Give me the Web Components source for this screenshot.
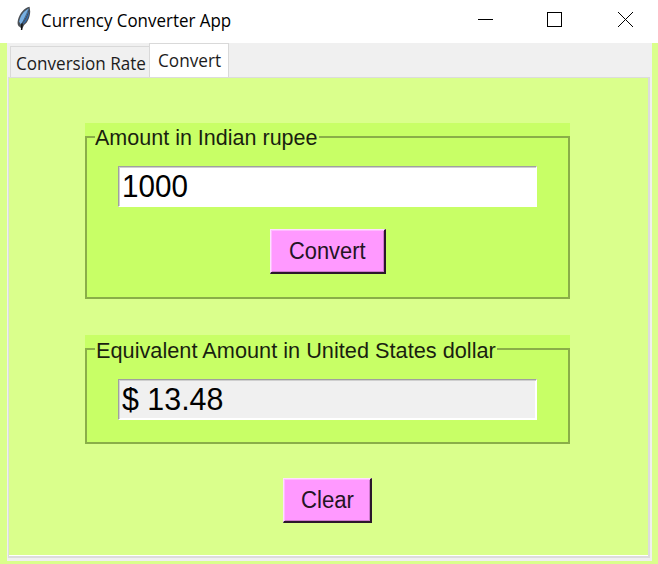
<!DOCTYPE html>
<html lang="en">
<head>
<meta charset="utf-8">
<title>Currency Converter App</title>
<style>
html,body{margin:0;width:658px;height:564px;overflow:hidden;background:#daff8c}
</style>
</head>
<body>
<converter-app></converter-app>
<script>
const define = (name, html, ready) => {
  const t = document.createElement('template');
  t.innerHTML = html;
  customElements.define(name, class extends HTMLElement {
    connectedCallback() {
      if (this.shadowRoot) return;
      this.attachShadow({mode: 'open'}).append(t.content.cloneNode(true));
      if (ready) ready.call(this, this.shadowRoot);
    }
  });
};

// A single line of text stretched horizontally to the given width.
define('fit-text', `<style>
:host{display:block;white-space:pre;flex:none}
span{display:inline-block;transform-origin:0 50%}
</style><span><slot></slot></span>`, function (root) {
  const w = +this.getAttribute('width');
  const s = root.querySelector('span');
  this.style.width = w + 'px';
  s.style.transform = `scaleX(${w / s.offsetWidth})`;
});

define('title-bar', `<style>
:host{display:flex;height:43px;background:#fff;color:#000;font:18px/22px "Open Sans","Noto Sans",sans-serif;box-sizing:border-box;padding-left:15px}
.feather{width:20px;height:32px;margin-top:4px}
.name{margin:9px 0 0 6px}
.controls{margin-left:auto;width:188px;height:43px}
</style>
<svg class="feather" viewBox="0 0 20 32">
<path d="M14.6 2.8C9.5 3.6 4.6 9.6 3 15.8C2 20 3 22 4.6 22.8L7 25L9.2 21C13.2 18.5 15 12.5 15.2 7.6Z" fill="#4a4f55"/>
<path d="M13.8 4.4C9 6.5 5 12 4.2 17.4L5.6 20.6C10 15.6 12.6 10 13.8 4.4Z" fill="#78b0e2"/>
<path d="M14.3 6.4C13 12 10.4 16.5 7.4 20.2L9 19.4C12.8 16 14.4 11 14.3 6.4Z" fill="#2f6cb4"/>
<path d="M13.5 5.5C11 12 8.5 16 6.6 21" fill="none" stroke="#2a4e78" stroke-width=".7"/>
<path d="M7 19.5L6.6 26" fill="none" stroke="#111" stroke-width="1.5"/>
</svg>
<fit-text class="name" width="190">Currency Converter App</fit-text>
<svg class="controls" viewBox="0 0 188 43" fill="none" stroke="#000">
<path d="M8 19.5h15" shape-rendering="crispEdges"/>
<path d="M77.5 12.5h14v14h-14z" shape-rendering="crispEdges"/>
<path d="M148 12l15 15m0-15l-15 15"/>
</svg>`);

define('tab-label', `<style>
:host{display:block;box-sizing:border-box;border:1px solid #d9d9d9;border-bottom:0;background:#f0f0f0;color:#1c1c1c;font:18px/24px "Open Sans","Noto Sans",sans-serif;width:140px;height:31px;padding:4px 0 0 5px}
:host([selected]){background:#fff;width:80px;height:34px;padding:4px 0 0 8px;margin-left:-1px;z-index:1}
</style><slot></slot>`);

define('tab-book', `<style>
:host{display:flex;flex-direction:column;box-sizing:border-box;width:645px;height:518px;margin-left:7px;border-left:1px solid #f0f0f0;background:#f0f0f0}
.tabs{display:flex;align-items:flex-end;height:34px;padding-left:2px}
.page{box-sizing:border-box;width:642px;height:481px;border:1px solid #dcdcdc;border-width:1px 2px 2px 1px;background:#daff8c;box-shadow:inset 0 -1px #fff;display:flex;flex-direction:column;align-items:center;padding:45px 2px 0 0}
</style><div class="tabs"><slot name="tab"></slot></div><div class="page"><slot></slot></div>`);

define('label-frame', `<style>
:host{display:block;box-sizing:border-box;width:485px;background:#c8ff66;font:22px/26px "Liberation Sans",Arial,sans-serif;color:#1a1f10;padding-top:13px}
.frame{display:flex;flex-direction:column;align-items:center;box-sizing:border-box;height:100%;border:2px solid #8aae48;width:485px}
.legend{align-self:flex-start;background:#c8ff66;margin:-13px 0 0 8px;padding:0 1px 0 0;height:26px}
:host(.second) .legend{padding:1px 1px 0 1px;height:25px}
</style><div class="frame"><div class="legend"><slot name="legend"></slot></div><slot></slot></div>`);

define('entry-box', `<style>
:host{display:block;box-sizing:border-box;width:419px;height:41px;margin-top:15px;background:#fff;border:1px solid;border-color:#a0a0a0 #fff #fff #a0a0a0;box-shadow:inset 1px 1px #cfcfcf,inset -1px -1px #fff;color:#000;font:31px/39px "Liberation Sans",Arial,sans-serif;padding-left:3px}
:host([readonly]){background:#f0f0f0;margin-top:16px}
</style><slot></slot>`);

define('push-button', `<style>
:host{display:flex;justify-content:center;box-sizing:border-box;width:116px;height:45px;margin-top:22px;background:#ff99ff;color:#241424;font:23px/42px "Liberation Sans",Arial,sans-serif;border:1px solid;border-color:#ffe0ff #2b182b #2b182b #ffe0ff;border-width:1px 2px 2px 1px;box-shadow:inset 1px 1px #ffbaff,inset -1px -1px #cc79cc}
:host([small]){width:89px;margin-top:34px}
</style><slot></slot>`);

define('converter-app', `<style>
:host{display:block;width:658px;height:564px;background:#daff8c}
.first{height:176px}.second{height:109px;margin-top:36px}
</style>
<title-bar></title-bar>
<tab-book>
<tab-label slot="tab"><fit-text width="130">Conversion Rate</fit-text></tab-label>
<tab-label slot="tab" selected><fit-text width="63">Convert</fit-text></tab-label>
<label-frame class="first"><fit-text slot="legend" width="223">Amount in Indian rupee</fit-text>
<entry-box><fit-text width="66">1000</fit-text></entry-box>
<push-button><fit-text width="77">Convert</fit-text></push-button></label-frame>
<label-frame class="second"><fit-text slot="legend" width="400">Equivalent Amount in United States dollar</fit-text>
<entry-box readonly><fit-text width="101">$ 13.48</fit-text></entry-box></label-frame>
<push-button small><fit-text width="53">Clear</fit-text></push-button>
</tab-book>`);
</script>
</body>
</html>
